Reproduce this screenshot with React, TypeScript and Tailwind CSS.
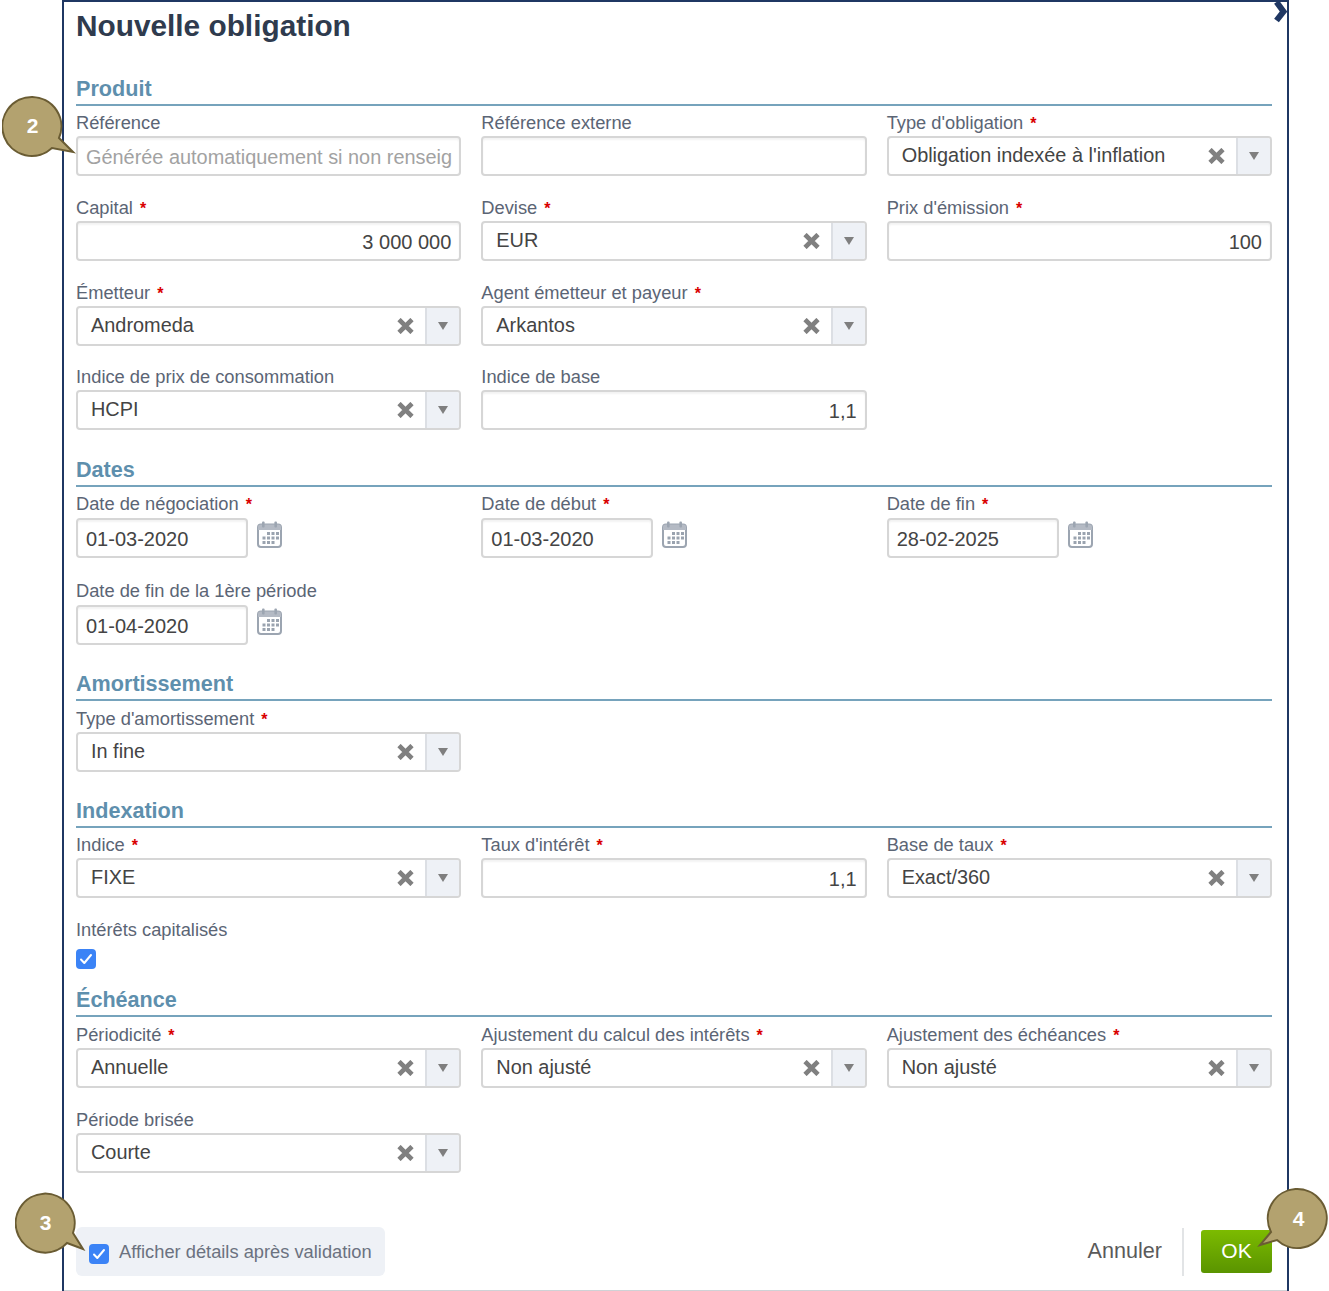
import React from "react";

const font = { fontFamily: '"Liberation Sans", Arial, sans-serif' };

function Heading({ children, className = "" }: { children: React.ReactNode; className?: string }) {
  return (
    <div className={`flex items-end border-b-2 border-[#76a3bc] pb-[2px] text-[21.6px] leading-[26px] font-bold text-[#5e8fad] ${className}`}>
      {children}
    </div>
  );
}

function Label({ text, req, className = "h-[30px]" }: { text: string; req?: boolean; className?: string }) {
  return (
    <div className={`${className} pt-[5px] text-[18.3px] leading-[24px] text-[#5b6575] whitespace-nowrap`}>
      {text}
      {req && <span className="ml-[7px] font-bold text-[16px] text-[#d90000]">*</span>}
    </div>
  );
}

function TextInput({ label, req, value, placeholder }: { label: string; req?: boolean; value?: string; placeholder?: string }) {
  return (
    <div>
      <Label text={label} req={req} />
      <div className="h-[40px] rounded-[4px] border-2 border-[#d6d6d6] bg-white shadow-[inset_0_2px_2px_rgba(0,0,0,0.05)] px-[8px] pt-[2px] flex items-center justify-end text-[20px] text-[#444]">
        {placeholder ? (
          <span className="w-full mt-[1px] whitespace-nowrap text-[19.9px] text-[#a2a2a2]">{placeholder}</span>
        ) : (
          value
        )}
      </div>
    </div>
  );
}

function Select({ label, req, value }: { label: string; req?: boolean; value: string }) {
  return (
    <div>
      <Label text={label} req={req} />
      <div className="h-[40px] rounded-[4px] border-2 border-[#d6d6d6] bg-white flex items-stretch overflow-hidden text-[19.9px] text-[#444]">
        <div className="flex-1 pl-[13px] flex items-center justify-between pr-[11px]">
          <span>{value}</span>
          <svg width="17" height="16" viewBox="0 0 17 16" aria-hidden="true">
            <path d="M2 1.5 L15 14.5 M15 1.5 L2 14.5" stroke="#808080" strokeWidth="4.6" strokeLinecap="butt" fill="none" />
          </svg>
        </div>
        <div className="w-[34px] border-l-2 border-[#dcdfe4] bg-[#eef1f6] flex items-center justify-center">
          <svg width="10" height="8" viewBox="0 0 10 8" aria-hidden="true">
            <path d="M0 0 H10 L5 8 Z" fill="#7f7f7f" />
          </svg>
        </div>
      </div>
    </div>
  );
}

const calDots: [number, number][] = [
  [10, 11], [14.5, 11], [19, 11],
  [5.5, 15.5], [10, 15.5], [14.5, 15.5], [19, 15.5],
  [5.5, 20], [10, 20], [14.5, 20],
];

function Calendar() {
  return (
    <svg width="25" height="27" viewBox="0 0 25 27" className="-mt-[6px] shrink-0" aria-hidden="true">
      <rect x="1" y="3.5" width="23" height="22.5" rx="3" fill="#fff" stroke="#9ca5b1" strokeWidth="2" />
      <path d="M1 9 V6 a2.5 2.5 0 0 1 2.5-2.5 H21.5 a2.5 2.5 0 0 1 2.5 2.5 V9 Z" fill="#b4bac4" />
      <rect x="5" y="0.5" width="2.6" height="6" rx="1" fill="#9ca5b1" />
      <rect x="17.4" y="0.5" width="2.6" height="6" rx="1" fill="#9ca5b1" />
      {calDots.map(([x, y]) => (
        <rect key={`${x}-${y}`} x={x} y={y} width="3" height="3" fill="#9aa3af" />
      ))}
    </svg>
  );
}

function DateField({ label, req, value }: { label: string; req?: boolean; value: string }) {
  return (
    <div>
      <Label text={label} req={req} className="h-[31.4px]" />
      <div className="flex items-center gap-[9px]">
        <div className="w-[172px] h-[40px] rounded-[4px] border-2 border-[#d6d6d6] bg-white shadow-[inset_0_2px_2px_rgba(0,0,0,0.05)] pl-[8px] pt-[2px] flex items-center text-[20px] text-[#444]">
          {value}
        </div>
        <Calendar />
      </div>
    </div>
  );
}

function Check() {
  return (
    <span className="w-[20px] h-[20px] rounded-[4px] bg-[#3b83f6] flex items-center justify-center shrink-0">
      <svg width="14" height="12" viewBox="0 0 14 12" aria-hidden="true">
        <path d="M2 6.5 L5.3 10 L12 2" stroke="#fff" strokeWidth="2" fill="none" strokeLinecap="round" strokeLinejoin="round" />
      </svg>
    </span>
  );
}

function Bubble({ n, pos, path, digit }: { n: string; pos: string; path: string; digit: string }) {
  return (
    <div className={`absolute ${pos} w-[90px] h-[64px]`}>
      <svg width="90" height="64" viewBox="0 0 90 64" className="absolute left-0 top-0" aria-hidden="true">
        <path d={path} fill="#b3a26f" stroke="#6a5c33" strokeWidth="2" />
      </svg>
      <span className={`absolute top-0 ${digit} w-[61px] h-[61px] flex items-center justify-center text-white font-bold text-[21px]`}>
        {n}
      </span>
    </div>
  );
}

const grid = "grid grid-cols-3 gap-x-[20px] gap-y-[14.67px]";

export default function App() {
  return (
    <div className="relative w-[1329px] h-[1291px] overflow-hidden bg-white" style={font}>
      <div className="relative ml-[62px] w-[1227px] h-[1291px] border-x-2 border-t-2 border-[#1f3763] pl-[12px] pr-[15px] flex flex-col">
        <h1 className="h-[48px] pt-[6px] text-[29.8px] leading-[36px] font-bold text-[#2f3b4e]">Nouvelle obligation</h1>
        <Heading className="mt-[15.3px] h-[41px]">Produit</Heading>
        <div className={grid}>
          <TextInput label="Référence" placeholder="Générée automatiquement si non renseig" />
          <TextInput label="Référence externe" />
          <Select label="Type d'obligation" req value="Obligation indexée à l'inflation" />
          <TextInput label="Capital" req value="3 000 000" />
          <Select label="Devise" req value="EUR" />
          <TextInput label="Prix d'émission" req value="100" />
          <Select label="Émetteur" req value="Andromeda" />
          <Select label="Agent émetteur et payeur" req value="Arkantos" />
          <div />
          <Select label="Indice de prix de consommation" value="HCPI" />
          <TextInput label="Indice de base" value="1,1" />
        </div>
        <Heading className="mt-[15.3px] h-[41px]">Dates</Heading>
        <div className="grid grid-cols-3 gap-x-[20px] gap-y-[15.6px]">
          <DateField label="Date de négociation" req value="01-03-2020" />
          <DateField label="Date de début" req value="01-03-2020" />
          <DateField label="Date de fin" req value="28-02-2025" />
          <DateField label="Date de fin de la 1ère période" value="01-04-2020" />
        </div>
        <Heading className="mt-[15px] h-[41px]">Amortissement</Heading>
        <div className={`${grid} mt-[1px]`}>
          <Select label="Type d'amortissement" req value="In fine" />
        </div>
        <Heading className="mt-[15.3px] h-[41px]">Indexation</Heading>
        <div className={grid}>
          <Select label="Indice" req value="FIXE" />
          <TextInput label="Taux d'intérêt" req value="1,1" />
          <Select label="Base de taux" req value="Exact/360" />
          <div className="col-span-3">
            <Label text="Intérêts capitalisés" className="h-[36px]" />
            <Check />
          </div>
        </div>
        <Heading className="mt-[6px] h-[42px]">Échéance</Heading>
        <div className={`${grid} mt-[1px]`}>
          <Select label="Périodicité" req value="Annuelle" />
          <Select label="Ajustement du calcul des intérêts" req value="Non ajusté" />
          <Select label="Ajustement des échéances" req value="Non ajusté" />
          <Select label="Période brisée" value="Courte" />
        </div>
        <div className="absolute left-0 right-0 bottom-0 h-[1px] bg-[#cfd2d6]" />
        <div className="mt-[54px] flex items-center justify-between h-[50px]">
          <label className="w-[309px] h-[49px] rounded-[6px] bg-[#eef1f6] flex items-center gap-[10px] pl-[13px] pt-[4px] text-[18.3px] text-[#6b7280]">
            <Check />
            <span className="-mt-[3px]">Afficher détails après validation</span>
          </label>
          <div className="flex items-center h-full">
            <span className="text-[21.6px] text-[#5a5a5a]">Annuler</span>
            <div className="w-[2px] h-[48px] bg-[#e2e4e6] ml-[20px] mr-[17px]" />
            <button className="w-[71px] h-[43px] pb-[1px] rounded-[3px] bg-gradient-to-b from-[#7cbb00] to-[#5a9400] text-white text-[21px]">OK</button>
          </div>
        </div>
        <svg width="13" height="22" viewBox="0 0 13 22" className="absolute right-0 top-0" aria-hidden="true">
          <path d="M2.5 0 L9.5 9.5 L2.5 18.5" stroke="#1f3763" strokeWidth="6" fill="none" />
        </svg>
      </div>
      <Bubble n="2" pos="left-[2px] top-[95px]" digit="left-0" path="M57 43 L71 57 L50 53 A29.5 29.5 0 1 1 57 43 Z" />
      <Bubble n="3" pos="left-[15px] top-[1192px]" digit="left-0" path="M58 41 L68 57 L52 51 A29.5 29.5 0 1 1 58 41 Z" />
      <Bubble n="4" pos="left-[1255px] top-[1188px]" digit="left-[13px]" path="M16 44 L5 57 L22 52 A29.5 29.5 0 1 0 16 44 Z" />
    </div>
  );
}
